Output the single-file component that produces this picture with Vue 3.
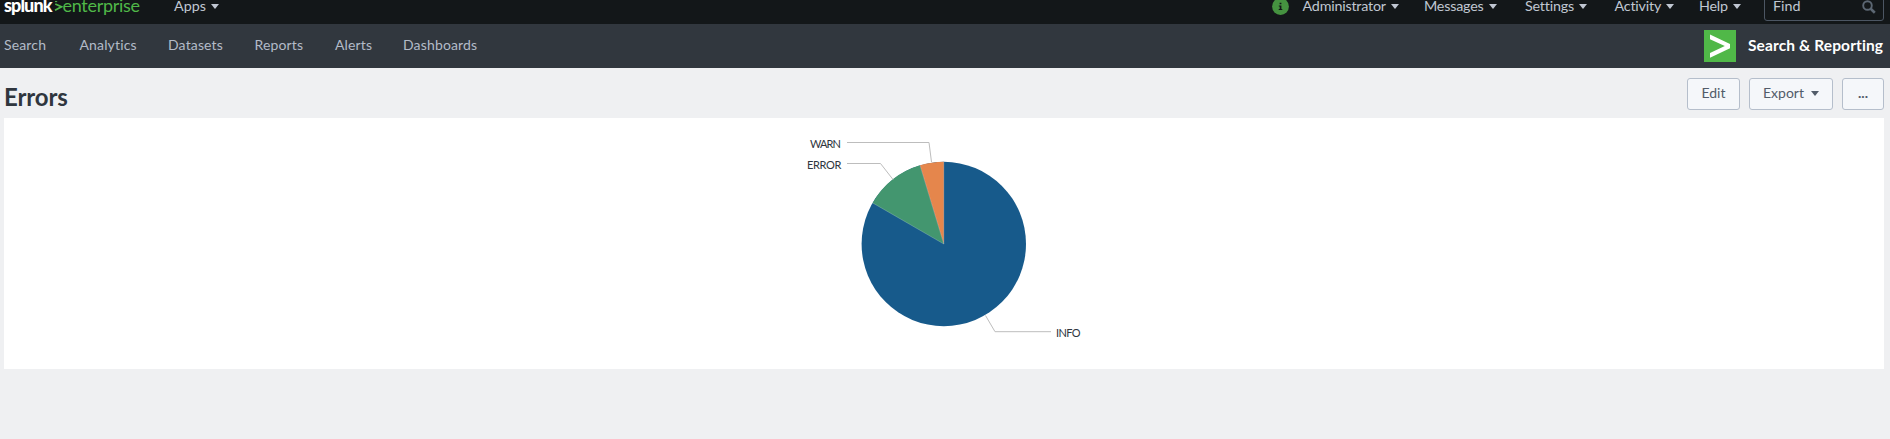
<script setup>
const account = [
  { label: 'Administrator', width: 121.5 },
  { label: 'Messages', width: 101 },
  { label: 'Settings', width: 89.5 },
  { label: 'Activity', width: 84.5 },
  { label: 'Help', width: 65 },
]
const views = [
  { label: 'Search', width: 75.5 },
  { label: 'Analytics', width: 88.5 },
  { label: 'Datasets', width: 86.5 },
  { label: 'Reports', width: 80.5 },
  { label: 'Alerts', width: 68 },
  { label: 'Dashboards', width: 90 },
]
</script>

<template>
  <div class="page">
    <header class="topbar">
      <div class="logo"><b>splunk</b><svg class="logo-mark" width="9" height="14" viewBox="0 0 9 14"><path d="M1.3 4 7.4 6.8 1 10.3" fill="none" stroke="#50b848" stroke-width="1.7" /><path d="M1 1.6h2.2" stroke="#50b848" stroke-width="1" /></svg><span>enterprise</span></div>
      <a class="menu apps">Apps<i class="caret"></i></a>
      <svg class="info" width="17" height="17" viewBox="0 0 17 17">
        <circle cx="8.5" cy="8.5" r="8.4" fill="#459240" />
        <path d="M7.6 4.8h1.8v1.5H7.6zM6.8 7.4h2.6v3.5h.9v1H6.7v-1h1V8.4h-.9z" fill="#14181a" />
      </svg>
      <nav class="account">
        <a v-for="m in account" :key="m.label" class="menu" :style="{ width: m.width + 'px' }">{{ m.label }}<i class="caret"></i></a>
      </nav>
      <div class="find">
        <span>Find</span>
        <svg width="14" height="14" viewBox="0 0 14 14" fill="none" stroke="#5c6773">
          <circle cx="5.5" cy="5.5" r="4.3" stroke-width="1.9" />
          <path d="m8.7 8.7 4.1 4" stroke-width="2.6" />
        </svg>
      </div>
    </header>

    <div class="appbar">
      <nav class="views">
        <a v-for="v in views" :key="v.label" :style="{ width: v.width + 'px' }">{{ v.label }}</a>
      </nav>
      <svg width="32" height="32" viewBox="0 0 32 32">
        <path d="M0 0h32v32H0z" fill="#50b848" />
        <path d="M6 4.5v4.7l14.8 6.9L6 23v4.7l20-9.5v-4.1z" fill="#fff" />
      </svg>
      <span class="app-name">Search &amp; Reporting</span>
    </div>

    <div class="heading">
      <h1>Errors</h1>
      <div class="actions">
        <button class="edit">Edit</button>
        <button class="export">Export<i class="caret"></i></button>
        <button class="more">...</button>
      </div>
    </div>

    <main class="panel">
      <svg width="320" height="251" viewBox="790 118 320 251">
        <circle cx="943.8" cy="244" r="82.2" fill="#175a8b" />
        <path d="M943.8 244 872.6 202.9A82.2 82.2 0 0 1 920 165.3z" fill="#43966f" />
        <path d="M943.8 244 920 165.3A82.2 82.2 0 0 1 943.8 161.8z" fill="#e5864c" />
        <path d="M872.6 202.9 943.8 244 920 165.3M943.8 244V162" fill="none" stroke="#fff" stroke-opacity=".4" stroke-width=".5" />
        <g fill="none" stroke="#bdbdbd">
          <path d="M847 142.5h82l2.5 19.5" />
          <path d="M847 163.5h33.5l12.5 16" />
          <path d="m985.5 315.5 9.5 16.2h56" />
        </g>
        <g class="labels">
          <text x="810" y="148" textLength="31">WARN</text>
          <text x="807" y="169" textLength="34.5">ERROR</text>
          <text x="1056" y="337" textLength="24.5">INFO</text>
        </g>
      </svg>
    </main>
  </div>
</template>

<style>
body { margin: 0; background: #eff0f2; }
</style>

<style scoped>
.page { height: 439px; overflow: hidden; background: #eff0f2; font: 14px/20px Lato, "Liberation Sans", sans-serif; color: #2f363e; }
.topbar { height: 24px; overflow: hidden; display: flex; align-items: flex-start; background: #131719; color: #c0c7d2; font-size: 14.3px; }
.logo { width: 170px; padding-left: 4px; display: flex; line-height: 20px; margin-top: -5px; color: #50b848; font-size: 18px; letter-spacing: -.3px; }
.logo b { width: 49.5px; color: #fff; font-weight: 900; letter-spacing: -.9px; }
.logo-mark { margin-top: 5px; flex: none; }
.menu { display: flex; flex: none; line-height: 20px; margin-top: -4px; letter-spacing: -.2px; }
.caret { width: 0; height: 0; margin: 8px 0 0 5px; border: solid transparent; border-width: 5px 4px 0; border-top-color: currentColor; }
.info { margin: -2px 0 0 auto; }
.account { display: flex; margin-left: 14px; }
.find { width: 120px; height: 41px; margin: -20px 6px 0 0; box-sizing: border-box; border: 1px solid #4c5663; border-radius: 3px; padding: 15px 7px 0 8px; display: flex; justify-content: space-between; }
.find svg { margin-top: 4px; }
.appbar { height: 44px; display: flex; align-items: center; background: #31373e; padding: 0 6px 0 4px; }
.views { display: flex; flex: 1; color: #b3bbc8; letter-spacing: .15px; padding-bottom: 2px; }
.app-name { width: 136px; margin-left: 12px; padding-bottom: 2px; color: #fff; font-size: 15.5px; font-weight: 700; letter-spacing: .12px; white-space: nowrap; }
.heading { height: 50px; display: flex; justify-content: space-between; padding: 0 6px 0 4px; }
h1 { margin: 14px 0 0; font-size: 24px; line-height: 30px; font-weight: 700; letter-spacing: -.1px; }
.apps { letter-spacing: 0; }
.actions { display: flex; gap: 9px; padding-top: 10px; }
button { height: 32px; box-sizing: border-box; padding: 0 0 2px; display: flex; justify-content: center; align-items: center; border: 1px solid #b5becb; border-radius: 3px; background: #f5f7fa; color: #525c69; font: inherit; }
.edit { width: 53px; }
.export { width: 84px; }
.export .caret { margin: 1px 0 0 7px; }
.more { width: 42px; font-weight: 700; }
.panel { height: 251px; margin: 0 6px 0 4px; background: #fff; padding-left: 786px; }
.panel svg { display: block; }
.labels { font-size: 11px; fill: #2f363e; }
</style>
